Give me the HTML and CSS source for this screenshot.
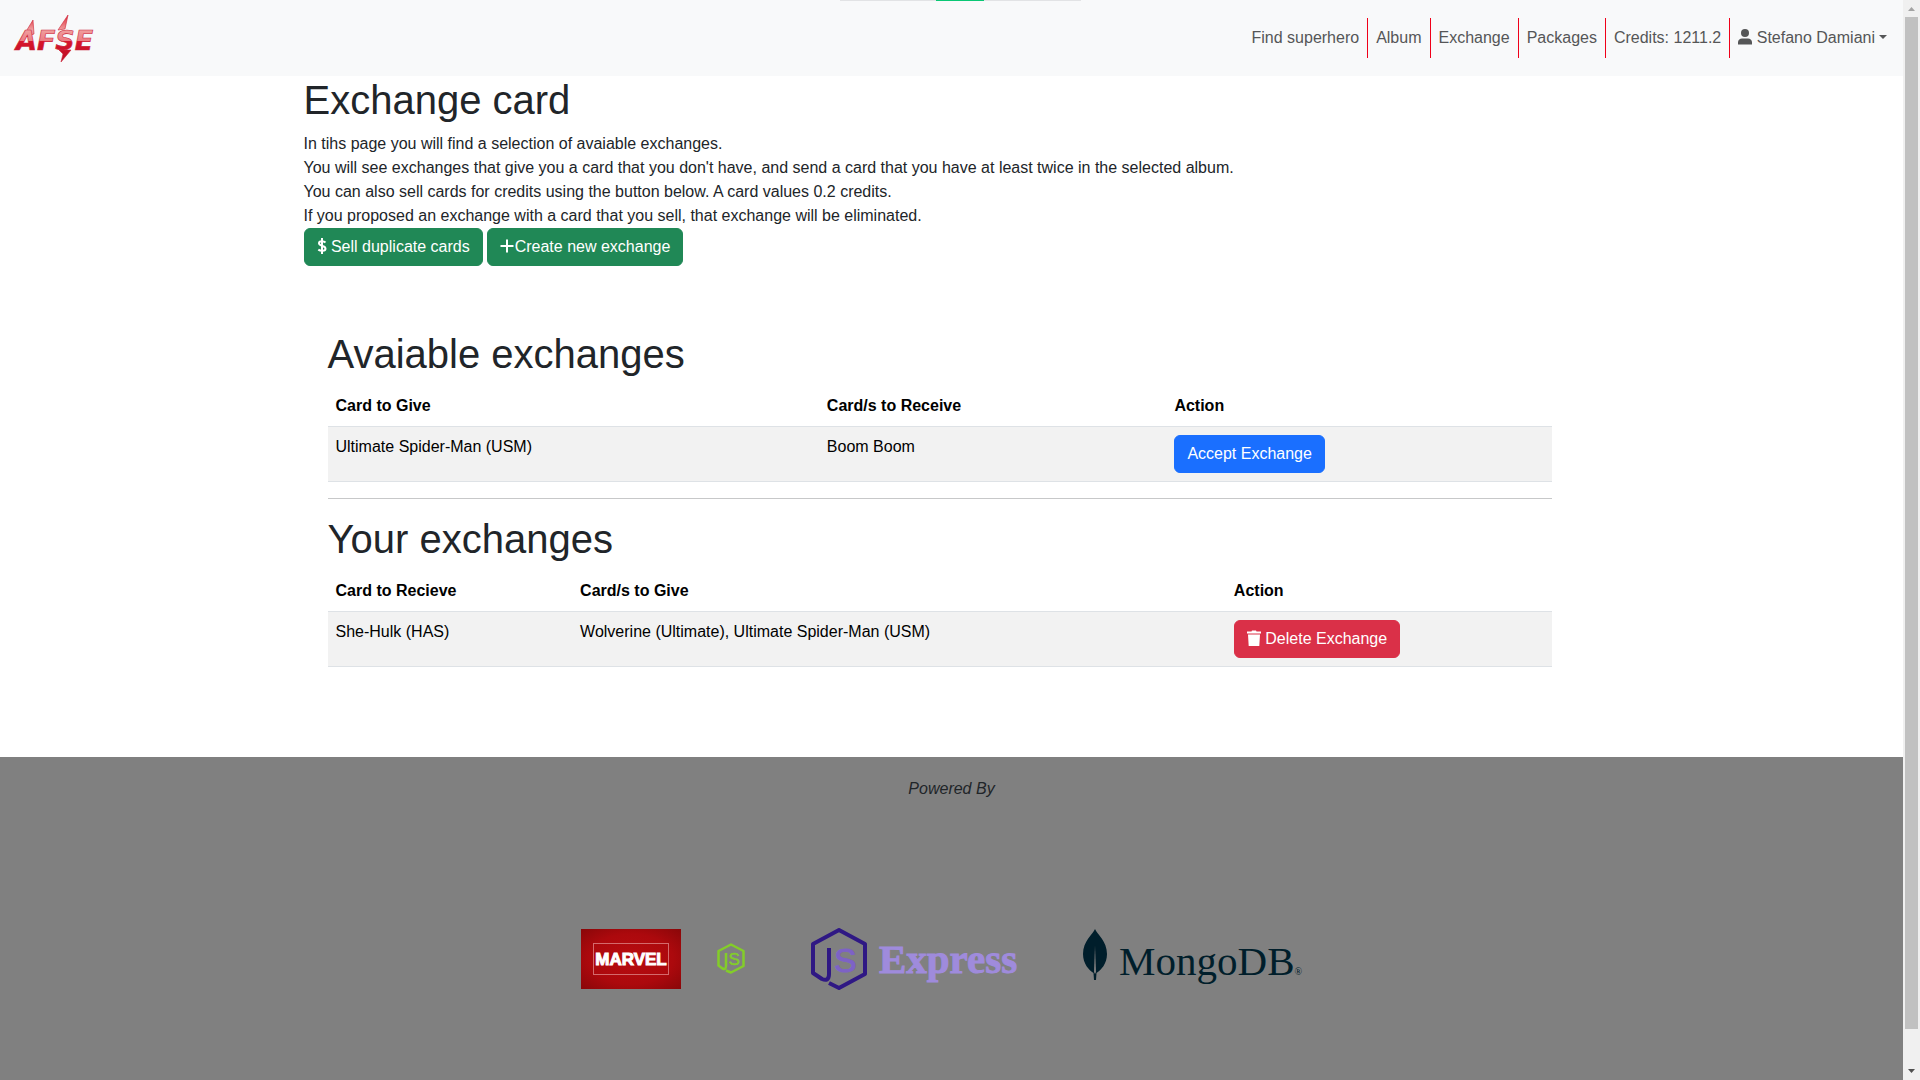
FILE: index.html
```html
<!DOCTYPE html>
<html lang="en">
<head>
<meta charset="utf-8">
<meta name="viewport" content="width=device-width, initial-scale=1">
<title>AFSE - Exchange card</title>
<link rel="stylesheet" href="styles.css">
</head>
<body>
<div class="page">
  <header class="navbar">
    <a class="brand" href="#" aria-label="AFSE home">
      <svg width="84" height="52" viewBox="0 0 84 52">
        <defs>
          <linearGradient id="brand-red" gradientUnits="userSpaceOnUse" x1="0" y1="4" x2="0" y2="50">
            <stop offset="0" stop-color="#e0303c"/>
            <stop offset="0.3" stop-color="#f0a0a0"/>
            <stop offset="0.54" stop-color="#ec7c82"/>
            <stop offset="0.55" stop-color="#d8142c"/>
            <stop offset="1" stop-color="#b80f24"/>
          </linearGradient>
        </defs>
        <g fill="url(#brand-red)" stroke="#cc2438" stroke-width="0.6">
          <path d="M21 8 10 26 22 22Z"/>
          <path d="M56 3 46 18 53 17Z"/>
          <path d="M47 38H59L49 50 51 42Z"/>
          <text class="brand-text" x="4" y="38">AFSE</text>
        </g>
      </svg>
    </a>
    <nav class="nav">
      <a href="#">Find superhero</a>
      <a href="#">Album</a>
      <a href="#">Exchange</a>
      <a href="#">Packages</a>
      <a href="#">Credits: 1211.2</a>
      <a href="#" class="user"><svg class="icon person" viewBox="1 0 14 16"><ellipse cx="8" cy="4" rx="4" ry="4"/><path d="M1 15.500C.5 12 2 9.500 5 9.500h6c3 0 4.500 2.500 4 6z"/></svg> Stefano Damiani<span class="caret"></span></a>
    </nav>
    <div class="loading"><span></span></div>
  </header>

  <main class="container">
    <h1>Exchange card</h1>
    <p>In tihs page you will find a selection of avaiable exchanges.<br>
    You will see exchanges that give you a card that you don't have, and send a card that you have at least twice in the selected album.<br>
    You can also sell cards for credits using the button below. A card values 0.2 credits.<br>
    If you proposed an exchange with a card that you sell, that exchange will be eliminated.</p>
    <div class="actions">
      <button class="btn green" type="button"><svg class="icon dollar" viewBox="0 0 10 16"><path d="M5 0v16M8.500 4.500C7 3 2 2.500 2 5.200 2 8.500 8.500 7 8.500 10.700 8.500 13.500 3.500 13.300 1.300 11.600"/></svg> Sell duplicate cards</button>
      <button class="btn green" type="button"><svg class="icon plus" viewBox="0 0 15 16"><path d="M7 1.500v13M.5 8h13"/></svg>Create new exchange</button>
    </div>

    <section class="exchanges">
      <h1>Avaiable exchanges</h1>
      <table>
        <thead><tr><th>Card to Give</th><th>Card/s to Receive</th><th>Action</th></tr></thead>
        <tbody><tr><td>Ultimate Spider-Man (USM)</td><td>Boom Boom</td><td><button class="btn blue" type="button">Accept Exchange</button></td></tr></tbody>
      </table>
      <hr>
      <h1>Your exchanges</h1>
      <table>
        <thead><tr><th>Card to Recieve</th><th>Card/s to Give</th><th>Action</th></tr></thead>
        <tbody><tr><td>She-Hulk (HAS)</td><td>Wolverine (Ultimate), Ultimate Spider-Man (USM)</td><td><button class="btn red" type="button"><svg class="icon trash" viewBox="0 0 14 16"><path d="M0 1.500h4.500L5 .5h4l.5 1H14v2H0zM1 4.500h12L12.300 16H1.700z"/></svg> Delete Exchange</button></td></tr></tbody>
      </table>
    </section>
  </main>

  <footer class="footer">
    <em>Powered By</em>
    <div class="logos">
      <svg width="100" height="60" viewBox="0 0 100 60" role="img" aria-label="Marvel">
        <defs>
          <radialGradient id="marvel-red" cx="0.5" cy="0.5" r="0.7">
            <stop offset="0" stop-color="#b80c10"/>
            <stop offset="0.6" stop-color="#ac090d"/>
            <stop offset="1" stop-color="#8a0709"/>
          </radialGradient>
        </defs>
        <rect width="100" height="60" fill="url(#marvel-red)"/>
        <rect x="12.500" y="14.500" width="75" height="31" fill="none" stroke="#d46a6c"/>
        <text class="marvel-text" x="50" y="36" text-anchor="middle">MARVEL</text>
      </svg>
      <svg class="node" width="28" height="31" viewBox="0 0 56 62" role="img" aria-label="Node.js">
        <path d="M18 20V46Q18 54 11 51L3 45V16L28 3 53 16V46L28 59 18 55"/>
        <text class="hex-s" x="23" y="44">S</text>
      </svg>
      <div class="express">
        <svg width="56" height="62" viewBox="0 0 56 62" aria-hidden="true">
          <path d="M18 20V46Q18 54 11 51L2 45V16L28 2 54 16V46L28 60 18 55"/>
          <text class="hex-s" x="23" y="44">S</text>
        </svg>
        <span>Express</span>
      </div>
      <div class="mongo">
        <svg width="24" height="52" viewBox="0 0 24 52" aria-hidden="true">
          <path fill="#001e2b" d="M12 0C14 5 24 12 24 25 24 35 18 41 13.500 44L13 51H11L10.500 44C6 41 0 35 0 25 0 12 10 5 12 0Z"/>
          <path fill="#808080" d="M12 17 13 43 12 45 11 43Z"/>
        </svg>
        <span>MongoDB<small>®</small></span>
      </div>
    </div>
  </footer>
</div>
<div class="scrollbar" aria-hidden="true">
  <svg width="17" height="17" viewBox="0 0 17 17"><path fill="#a3a3a3" d="M5 11 8.500 7 12 11Z"/></svg>
  <div class="thumb"></div>
  <svg width="17" height="17" viewBox="0 0 17 17"><path fill="#505050" d="M5 6 8.500 10 12 6Z"/></svg>
</div>
</body>
</html>
```
FILE: styles.css
```css
* { box-sizing: border-box; }

body {
  margin: 0;
  display: flex;
  min-height: 100vh;
  font-family: "Liberation Sans", Arial, sans-serif;
  font-size: 16px;
  line-height: 24px;
  color: #212529;
  background: #fff;
}

.page {
  flex: 1;
  display: flex;
  flex-direction: column;
}

/* Navigation */
.navbar {
  position: relative;
  display: flex;
  align-items: center;
  justify-content: space-between;
  min-height: 76px;
  padding: 0 8px 0 12px;
  background: #f8f9fa;
}
.brand { display: flex; }
.brand-text { font: italic bold 27px "DejaVu Sans", sans-serif; }
.nav { display: flex; }
.nav a {
  padding: 8px;
  color: #555657;
  text-decoration: none;
  border-right: 1px solid #f00019;
}
.nav a.user { border-right: 0; }
.caret {
  display: inline-block;
  margin-left: 4px;
  vertical-align: 4px;
  border: 4px solid transparent;
  border-top-color: currentColor;
  border-bottom: 0;
}
.loading {
  position: absolute;
  top: 0;
  left: 840px;
  width: 241px;
  height: 1px;
  background: #e2e3e5;
}
.loading span {
  display: block;
  width: 48px;
  height: 1px;
  margin-left: 96px;
  background: #0ac774;
}

.icon {
  width: 14px;
  height: 16px;
  vertical-align: -2px;
  fill: currentColor;
}
.dollar, .plus {
  fill: none;
  stroke: currentColor;
  stroke-width: 2px;
}
.icon.dollar { width: 10px; }
.icon.plus { width: 15px; }

/* Content */
.container {
  width: 100%;
  max-width: 1320px;
  margin: 0 auto;
  padding: 0 12px 90px;
}
h1 {
  margin: 0 0 8px;
  font-size: 40px;
  line-height: 48px;
  font-weight: 400;
}
p { margin: 0; }
.actions { display: flex; gap: 4px; }
.btn {
  height: 38px;
  padding: 6px 12px;
  border: 1px solid transparent;
  border-radius: 6px;
  font: inherit;
  color: #fff;
}
.green { background: #208856; border-color: #208856; }
.blue { background: #1a6fff; border-color: #1a6fff; }
.red { background: #da3048; border-color: #da3048; }

.exchanges { padding: 64px 48px 0 24px; }
table {
  width: 100%;
  border-collapse: collapse;
  color: #000;
}
th, td {
  padding: 8px;
  text-align: left;
  vertical-align: top;
  border-bottom: 1px solid #dee2e6;
}
td { background: #f2f2f2; }
td .btn { display: block; }
hr {
  margin: 16px 0;
  border: 0;
  border-top: 1px solid #c7c8c9;
}

/* Footer */
.footer {
  flex: 1;
  display: flex;
  flex-direction: column;
  align-items: center;
  padding: 20px 0;
  background: #808080;
}
.logos {
  display: flex;
  align-items: center;
  gap: 36px;
  padding: 120px 20px 0 0;
}
.marvel-text {
  font: bold 17px "Liberation Sans", sans-serif;
  fill: #fff;
  stroke: #fff;
  stroke-width: 1px;
}
.hex-s { font: 34px "Liberation Sans", sans-serif; stroke-width: 1px; }
.node path, .express path {
  fill: none;
  stroke-width: 4px;
  stroke-linejoin: round;
}
.node path { stroke: #83cd29; stroke-width: 5px; }
.node .hex-s { fill: #83cd29; stroke: #83cd29; }
.express path { stroke: #2f1884; }
.express .hex-s { fill: #7d62c6; stroke: #7d62c6; }
.express, .mongo {
  display: flex;
  align-items: center;
  gap: 12px;
  margin-left: 30px;
  font-family: "Liberation Serif", serif;
  font-size: 41px;
  line-height: 48px;
}
.express { font-weight: 700; color: #9f8bdc; -webkit-text-stroke: 1px #9f8bdc; }
.mongo { align-items: flex-start; padding-top: 8px; color: #001e2b; }
.mongo span { padding-top: 8px; }
.mongo small { font-size: 10px; }

/* Scroll track */
.scrollbar {
  display: flex;
  flex-direction: column;
  width: 17px;
  background: #f0f0f0;
}
.thumb {
  flex: 1;
  margin: 0 2px 34px;
  background: #c1c1c1;
}
```
